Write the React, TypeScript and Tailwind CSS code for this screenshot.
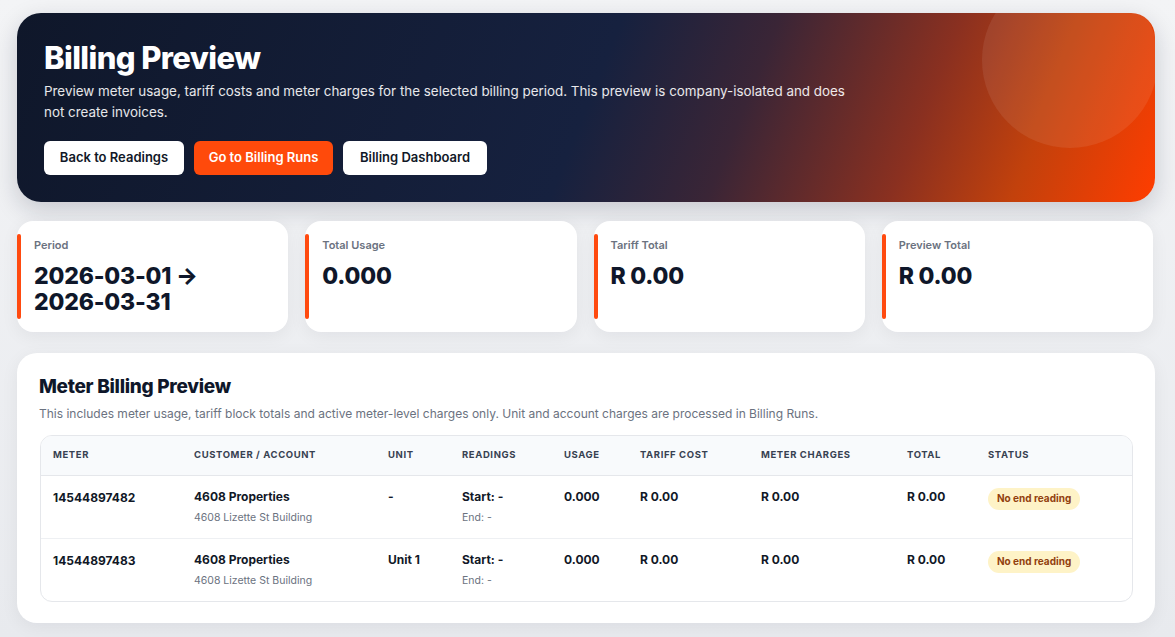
import React from "react";

type Row = {
    meter: string;
    customer: string;
    building: string;
    unit: string;
    usage: string;
    tariff: string;
    charges: string;
    total: string;
};

const rows: Row[] = [
    {meter: "14544897482", customer: "4608 Properties", building: "4608 Lizette St Building", unit: "-", usage: "0.000", tariff: "R 0.00", charges: "R 0.00", total: "R 0.00"},
    {meter: "14544897483", customer: "4608 Properties", building: "4608 Lizette St Building", unit: "Unit 1", usage: "0.000", tariff: "R 0.00", charges: "R 0.00", total: "R 0.00"},
];

const stats = [
    {label: "Period", value: "2026-03-01 → 2026-03-31"},
    {label: "Total Usage", value: "0.000"},
    {label: "Tariff Total", value: "R 0.00"},
    {label: "Preview Total", value: "R 0.00"},
];

const headers = [
    {label: "Meter", w: "w-[141px]"},
    {label: "Customer / Account", w: "w-[194px]"},
    {label: "Unit", w: "w-[74px]"},
    {label: "Readings", w: "w-[102px]"},
    {label: "Usage", w: "w-[76px]"},
    {label: "Tariff Cost", w: "w-[121px]"},
    {label: "Meter Charges", w: "w-[146px]"},
    {label: "Total", w: "w-[81px]"},
    {label: "Status", w: ""},
];

function StatCard({label, value}: {label: string; value: string}) {
    return (
        <div className="relative bg-white rounded-2xl h-[111px] pl-[17px] pr-4 pt-[16px] shadow-[0_4px_18px_rgba(15,23,42,0.06)]">
            <div className="absolute left-0 top-[13px] bottom-[13px] w-[4px] rounded-full bg-[#ff4a0f]"/>
            <div className="text-[11px] font-semibold text-[#6b7280] leading-4">{label}</div>
            <div className="mt-[10px] text-[23px] font-extrabold text-[#0f172a] leading-[26px] tracking-[-0.2px] max-w-[190px]">
                {value}
            </div>
        </div>
    );
}

export default function App() {
    return (
        <div className="min-h-screen bg-gradient-to-b from-[#f3f4f6] to-[#e8eaee] pl-[17px] pr-[20px] pt-[13px] pb-4 font-['Inter',sans-serif] text-[#111827]">
            {/* Hero */}
            <div className="relative overflow-hidden rounded-[24px] h-[189px] px-[27px] pt-[26px] bg-[linear-gradient(112deg,#0f172a_0%,#16213f_50%,#3a2536_63%,#8a3020_78%,#c2410c_88%,#ff3d00_100%)] shadow-[0_8px_24px_rgba(15,23,42,0.18)]">
                <div className="absolute -right-[3px] -top-[41px] w-[176px] h-[176px] rounded-full bg-white/[0.08]"/>
                <h1 className="relative text-[31px] font-extrabold text-white leading-[38px] tracking-[-0.6px]">Billing Preview</h1>
                <p className="relative mt-[4px] text-[13.4px] text-white/90 leading-[21px] max-w-[805px]">
                    Preview meter usage, tariff costs and meter charges for the selected billing period. This preview is company-isolated and does not create invoices.
                </p>
                <div className="relative mt-[18px] flex gap-[10px]">
                    <button className="h-[34px] w-[140px] rounded-md bg-white text-[13px] font-semibold text-[#111827]">Back to Readings</button>
                    <button className="h-[34px] w-[139px] rounded-md bg-[#ff4a0b] text-[13px] font-semibold text-white">Go to Billing Runs</button>
                    <button className="h-[34px] w-[144px] rounded-md bg-white text-[13px] font-semibold text-[#111827]">Billing Dashboard</button>
                </div>
            </div>

            {/* Stats */}
            <div className="mt-[19px] mr-[2px] grid grid-cols-4 gap-[17px]">
                {stats.map(s => <StatCard key={s.label} label={s.label} value={s.value}/>)}
            </div>

            {/* Table card */}
            <div className="mt-[21px] bg-white rounded-[20px] px-[22px] pt-[22px] pb-[21px] shadow-[0_4px_18px_rgba(15,23,42,0.06)]">
                <h2 className="text-[19px] font-extrabold text-[#0f172a] leading-[24px] tracking-[-0.3px]">Meter Billing Preview</h2>
                <p className="mt-[6px] text-[12px] text-[#6b7280] leading-[18px]">
                    This includes meter usage, tariff block totals and active meter-level charges only. Unit and account charges are processed in Billing Runs.
                </p>
                <div className="mt-[12px] ml-px border border-[#e5e7eb] rounded-xl overflow-hidden">
                    <table className="w-full table-fixed border-collapse">
                        <thead>
                        <tr className="bg-[#f8fafc] border-b border-[#e5e7eb]">
                            {headers.map(h => (
                                <th key={h.label} className={`${h.w} h-[39px] px-3 text-left text-[9.5px] font-bold uppercase tracking-[0.6px] text-[#374151]`}>
                                    {h.label}
                                </th>
                            ))}
                        </tr>
                        </thead>
                        <tbody>
                        {rows.map((r, i) => (
                            <tr key={r.meter} className={i < rows.length - 1 ? "border-b border-[#eef0f3]" : ""}>
                                <td className="h-[63px] px-3 align-top pt-[13px] text-[12px] font-bold text-[#111827]">{r.meter}</td>
                                <td className="px-3 align-top pt-[13px]">
                                    <div className="text-[12px] font-bold text-[#111827] leading-4">{r.customer}</div>
                                    <div className="mt-[5px] text-[10.5px] text-[#6b7280] leading-4">{r.building}</div>
                                </td>
                                <td className="px-3 align-top pt-[13px] text-[12px] font-bold leading-4">{r.unit}</td>
                                <td className="px-3 align-top pt-[13px]">
                                    <div className="text-[12px] font-bold leading-4">Start: -</div>
                                    <div className="mt-[5px] text-[10.5px] text-[#6b7280] leading-4">End: -</div>
                                </td>
                                <td className="px-3 align-top pt-[13px] text-[12px] font-bold leading-4">{r.usage}</td>
                                <td className="px-3 align-top pt-[13px] text-[12px] font-bold leading-4">{r.tariff}</td>
                                <td className="px-3 align-top pt-[13px] text-[12px] font-bold leading-4">{r.charges}</td>
                                <td className="px-3 align-top pt-[13px] text-[12px] font-bold leading-4">{r.total}</td>
                                <td className="px-3 align-top pt-[12px]">
                                    <span className="inline-flex items-center h-[22px] px-[9px] rounded-full bg-[#fef3c7] text-[10px] font-bold text-[#92400e] align-top">
                                        No end reading
                                    </span>
                                </td>
                            </tr>
                        ))}
                        </tbody>
                    </table>
                </div>
            </div>
        </div>
    );
}
